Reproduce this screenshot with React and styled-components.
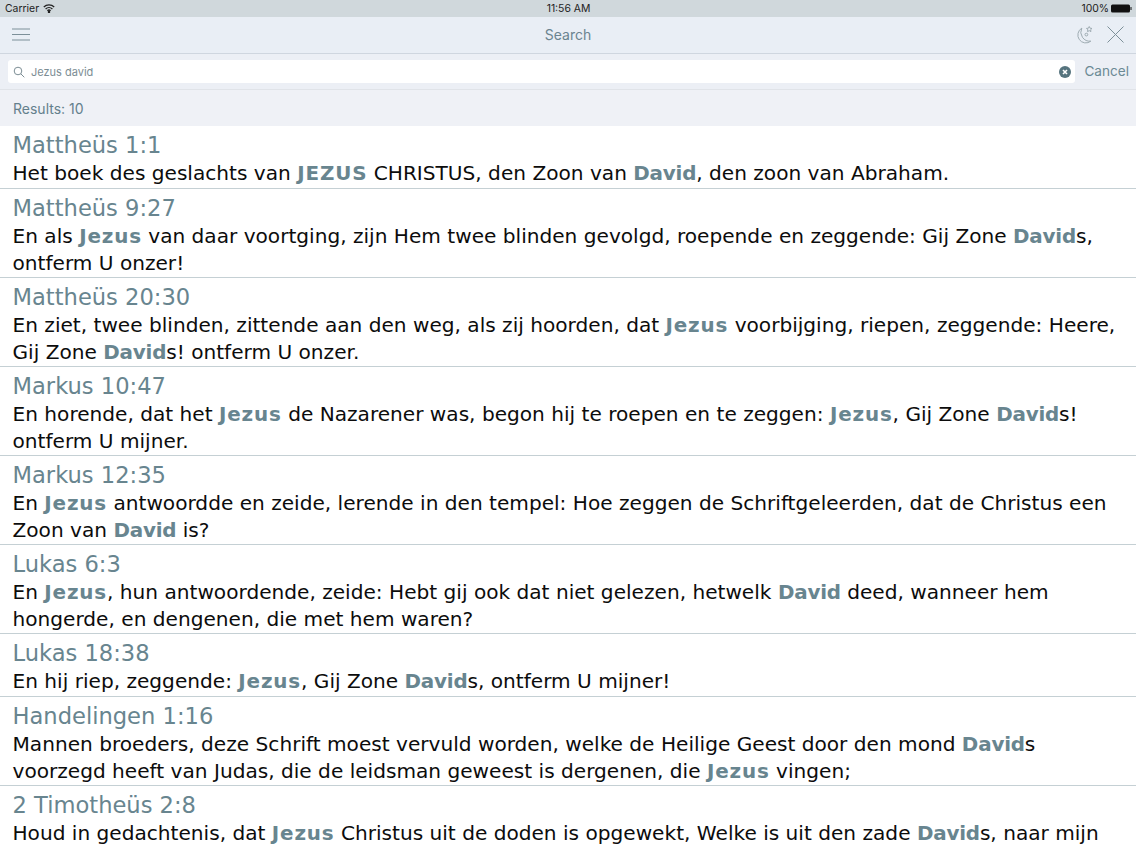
import React from "react";
import styled, { createGlobalStyle } from "styled-components";

const Global = createGlobalStyle`
  html, body { margin: 0; padding: 0; background: #fff; }
  #root { width: 1136px; height: 852px; overflow: hidden; }
`;
const Page = styled.div`
  width: 1136px; height: 852px; overflow: hidden; display: flex; flex-direction: column;
  font-family: "Inter", "Liberation Sans", Arial, sans-serif;
`;
const StatusBar = styled.div`
  height: 17px; flex: none; background: #d0d8dc; display: grid; grid-template-columns: 1fr auto 1fr;
  align-items: center; padding: 0 4px 0 5px; font-size: 10.4px; color: #222; box-sizing: border-box;
`;
const StatusLeft = styled.div`display: flex; align-items: center; gap: 4px;`;
const StatusRight = styled.div`display: flex; align-items: center; justify-content: flex-end; gap: 2px;`;
const NavBar = styled.div`
  height: 37px; flex: none; background: #e9eef5; border-bottom: 1px solid #cfd6df; box-sizing: border-box;
  display: grid; grid-template-columns: 1fr auto 1fr; align-items: center; padding: 0 12px 1px;
`;
const NavLeft = styled.div`display: flex; align-items: center;`;
const NavTitle = styled.div`font-size: 14px; color: #6b8490;`;
const NavRight = styled.div`display: flex; justify-content: flex-end; align-items: center; gap: 13px;`;
const SearchBar = styled.div`
  height: 36px; flex: none; background: #eceff5; border-bottom: 1px solid #e0e3e8; box-sizing: border-box;
  display: flex; align-items: center; padding: 0 7px 0 8px; gap: 9px;
`;
const SearchField = styled.div`
  flex: 1; height: 23px; background: #fff; border-radius: 3px; display: flex; align-items: center;
  padding: 0 4px 0 5px; gap: 6px; font-size: 11px; color: #7c8d94;
`;
const SearchText = styled.span`flex: 1;`;
const Cancel = styled.div`font-size: 13.6px; color: #6b8a94; padding-bottom: 2px;`;
const ResultsBar = styled.div`
  height: 36px; flex: none; background: #eff1f6; display: flex; align-items: center; padding: 0 13px;
  font-size: 14px; color: #64808c; box-sizing: border-box;
`;
const Row = styled.div`
  padding: 5px 12.5px 0; height: ${p => p.$lines === 1 ? 63 : 89}px; box-sizing: border-box; flex: none;
  border-bottom: 1px solid #c5d0d4; font-family: "DejaVu Sans", Verdana, sans-serif; background: #fff;
`;
const Ref = styled.div`font-size: 22.6px; line-height: 28px; color: #68858f; white-space: nowrap;`;
const Verse = styled.div`font-size: 20.13px; line-height: 26px; margin-top: 1px; color: #0c0c0c;`;
const Hit = styled.b`
  color: #68858f; font-weight: 700; font-size: 19.9px;
  letter-spacing: ${p => p.$track}px;
`;

const data = [
  ["Mattheüs 1:1", 1, ["Het boek des geslachts van ", "*JEZUS", " CHRISTUS, den Zoon van ", "*David", ", den zoon van Abraham."]],
  ["Mattheüs 9:27", 2, ["En als ", "*Jezus", " van daar voortging, zijn Hem twee blinden gevolgd, roepende en zeggende: Gij Zone ", "*David", "s, ontferm U onzer!"]],
  ["Mattheüs 20:30", 2, ["En ziet, twee blinden, zittende aan den weg, als zij hoorden, dat ", "*Jezus", " voorbijging, riepen, zeggende: Heere, Gij Zone ", "*David", "s! ontferm U onzer."]],
  ["Markus 10:47", 2, ["En horende, dat het ", "*Jezus", " de Nazarener was, begon hij te roepen en te zeggen: ", "*Jezus", ", Gij Zone ", "*David", "s! ontferm U mijner."]],
  ["Markus 12:35", 2, ["En ", "*Jezus", " antwoordde en zeide, lerende in den tempel: Hoe zeggen de Schriftgeleerden, dat de Christus een Zoon van ", "*David", " is?"]],
  ["Lukas 6:3", 2, ["En ", "*Jezus", ", hun antwoordende, zeide: Hebt gij ook dat niet gelezen, hetwelk ", "*David", " deed, wanneer hem hongerde, en dengenen, die met hem waren?"]],
  ["Lukas 18:38", 1, ["En hij riep, zeggende: ", "*Jezus", ", Gij Zone ", "*David", "s, ontferm U mijner!"]],
  ["Handelingen 1:16", 2, ["Mannen broeders, deze Schrift moest vervuld worden, welke de Heilige Geest door den mond ", "*David", "s voorzegd heeft van Judas, die de leidsman geweest is dergenen, die ", "*Jezus", " vingen;"]],
  ["2 Timotheüs 2:8", 2, ["Houd in gedachtenis, dat ", "*Jezus", " Christus uit de doden is opgewekt, Welke is uit den zade ", "*David", "s, naar mijn Evangelie;"]],
];

const Wifi = () => (
  <svg width="12" height="9" viewBox="0 0 12 9" fill="none" stroke="#222" strokeWidth="1.3">
    <path d="M.8 3A7.5 7.5 0 0 1 11.2 3" /><path d="M2.6 4.9a5 5 0 0 1 6.8 0" /><path d="M4.4 6.7a2.4 2.4 0 0 1 3.2 0" />
    <circle cx="6" cy="8" r=".6" fill="#222" />
  </svg>
);
const Battery = () => (
  <svg width="21" height="9" viewBox="0 0 21 9">
    <rect x="0" y=".5" width="19" height="8" rx="1.5" fill="#111" />
    <path d="M19.5 3h1v3h-1z" fill="#111" />
  </svg>
);
const Menu = () => (
  <svg width="18" height="13" viewBox="0 0 18 13" stroke="#7d9099" strokeWidth="1">
    <path d="M0 1h18M0 6.5h18M0 12h18" />
  </svg>
);
const Moon = () => (
  <svg width="18" height="20" viewBox="0 0 17 18" fill="none" stroke="#9aa8ae" strokeWidth=".9">
    <path d="M5.5 2.5A7.5 7.5 0 1 0 14 14.8 8.5 8.5 0 0 1 5.5 2.5Z" />
    <path d="M12.5 1l.8 1.6 1.8.2-1.3 1.2.3 1.8-1.6-.9-1.6.9.3-1.8-1.3-1.2 1.8-.2Z" />
    <circle cx="9.8" cy="8.6" r="1.3" />
  </svg>
);
const Close = () => (
  <svg width="17" height="17" viewBox="0 0 17 17" stroke="#7d9099" strokeWidth="1">
    <path d="M.5.5l16 16M16.5.5l-16 16" />
  </svg>
);
const Lens = () => (
  <svg width="12" height="12" viewBox="0 0 12 12" fill="none" stroke="#7c8d94" strokeWidth="1">
    <circle cx="5" cy="5" r="3.8" /><path d="M7.8 7.8L11.3 11.3" />
  </svg>
);
const Clear = () => (
  <svg width="12" height="12" viewBox="0 0 12 12">
    <circle cx="6" cy="6" r="6" fill="#56747e" />
    <path d="M4 4l4 4M8 4l-4 4" stroke="#fff" strokeWidth="1.6" />
  </svg>
);

const trackOf = word => (word.toLowerCase() === "jezus" ? 0.85 : -0.2);

export default function App() {
  return (
    <Page>
      <Global />
      <StatusBar>
        <StatusLeft>Carrier <Wifi /></StatusLeft>
        <div>11:56 AM</div>
        <StatusRight>100% <Battery /></StatusRight>
      </StatusBar>
      <NavBar>
        <NavLeft><Menu /></NavLeft>
        <NavTitle>Search</NavTitle>
        <NavRight><Moon /><Close /></NavRight>
      </NavBar>
      <SearchBar>
        <SearchField>
          <Lens />
          <SearchText>Jezus david</SearchText>
          <Clear />
        </SearchField>
        <Cancel>Cancel</Cancel>
      </SearchBar>
      <ResultsBar>Results: 10</ResultsBar>
      {data.map(([r, lines, parts]) => (
        <Row key={r} $lines={lines}>
          <Ref>{r}</Ref>
          <Verse>
            {parts.map((p, i) => p[0] === "*"
              ? <Hit key={i} $track={trackOf(p.slice(1))}>{p.slice(1)}</Hit>
              : <span key={i}>{p}</span>)}
          </Verse>
        </Row>
      ))}
    </Page>
  );
}
